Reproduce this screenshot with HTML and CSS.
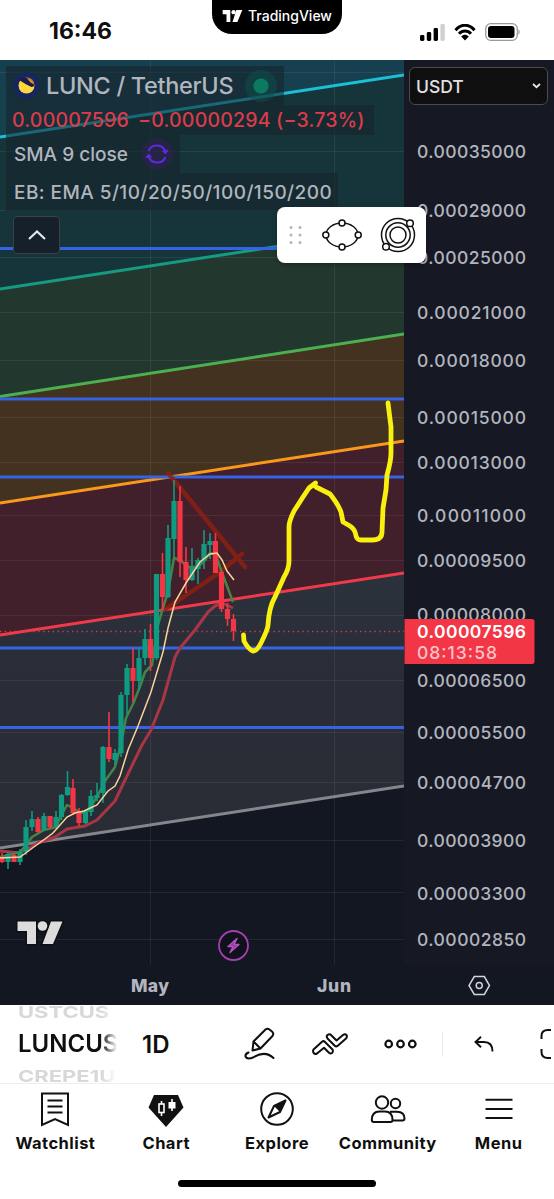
FILE: index.html
```html
<!DOCTYPE html>
<html lang="en">
<head>
  <meta charset="UTF-8" />
  <meta name="viewport" content="width=device-width, initial-scale=1.0" />
  <title>LUNC / TetherUS – TradingView</title>
  <link rel="stylesheet" href="styles.css">
</head>
<body>
  <header class="status">
    <div class="clock">16:46</div>
    <div class="island">
      <svg width="21" height="12" viewBox="0 0 36 22"><path d="M0 0H14V22H7V8H0ZM25 0H36L27 22H18Z" fill="#fff"/><circle cx="20" cy="4" r="4" fill="#fff"/></svg>
      <span>TradingView</span>
    </div>
    <div class="indicators">
      <svg width="25" height="17" viewBox="0 0 25 17">
        <rect x="0" y="11" width="4.4" height="6" rx="1.4"/><rect x="6.8" y="8" width="4.4" height="9" rx="1.4"/><rect x="13.6" y="4" width="4.4" height="13" rx="1.4"/><rect x="20.4" y="0" width="4.4" height="17" rx="1.4" fill="#d0d0d0"/>
      </svg>
      <svg width="22" height="17" viewBox="0 0 22 17">
        <path d="M1.5 6.2C7-.4 15-.4 20.500 6.200M5 9.800C8.500 6 13.500 6 17 9.800" fill="none" stroke="#000" stroke-width="3"/>
        <path d="M7.200 12.500C9.300 10.300 12.700 10.300 14.800 12.500L11 16.500Z"/>
      </svg>
      <svg width="36" height="18" viewBox="0 0 36 18">
        <rect x=".7" y=".7" width="31.600" height="16.600" rx="5" fill="none" stroke="#999" stroke-width="1.300"/>
        <rect x="3" y="3" width="26.500" height="12" rx="3"/><path d="M33.500 6Q36 9 33.500 12Z" fill="#999"/>
      </svg>
    </div>
  </header>

  <main class="chart">
    <svg class="plot" width="554" height="945" viewBox="0 60 554 945">
      <defs>
        <linearGradient id="top" x1="0" y1="0" x2="0" y2="1"><stop offset="0" stop-color="#163f50"/><stop offset="1" stop-color="#15424c"/></linearGradient>
        <linearGradient id="low" x1="0" y1="0" x2="0" y2="1"><stop offset="0" stop-color="#2a323c"/><stop offset=".45" stop-color="#2a2c37"/><stop offset="1" stop-color="#2a2c35"/></linearGradient>
        <clipPath id="pane"><rect x="0" y="60" width="404" height="904"/></clipPath>
      </defs>
      <rect x="0" y="60" width="554" height="945" fill="#131722"/>
      <rect x="404" y="60" width="150" height="945" fill="#161924"/>
      <rect x="0" y="964" width="554" height="41" fill="#131722"/>
      <g clip-path="url(#pane)">
        <!-- channel bands -->
        <path d="M0 60H404V75L0 137Z" fill="url(#top)"/>
        <path d="M0 137L404 75V227L0 289Z" fill="#15353b"/>
        <path d="M0 289L404 227V334L0 396.500Z" fill="#22382f"/>
        <path d="M0 396.500L404 334V441L0 503Z" fill="#43321f"/>
        <path d="M0 503L404 441V573L0 635Z" fill="#411f2b"/>
        <path d="M0 635L404 573V786L0 848Z" fill="url(#low)"/>

        <path class="grid" d="M0 72.500H404M0 151.500H404M0 210.500H404M0 257.500H404M0 312.500H404M0 360.500H404M0 417.500H404M0 462.500H404M0 515.500H404M0 560.500H404M0 615.500H404M0 680.500H404M0 732.500H404M0 782.500H404M0 840.500H404M0 892.500H404M0 939.500H404M150.500 60V964M334.500 60V964"/>

        <g class="trend">
          <path d="M0 137L404 75" stroke="#1bbfd6"/>
          <path d="M0 289L404 227" stroke="#179a82"/>
          <path d="M0 396.500L404 334" stroke="#4caf50"/>
          <path d="M0 503L404 441" stroke="#f9981b"/>
          <path d="M0 635L404 573" stroke="#f03a4b"/>
          <path d="M0 848L404 786" stroke="#85868c"/>
        </g>

        <!-- horizontal levels -->
        <path d="M0 248.500H404M0 399H404M0 477H404M0 648H404M0 727.500H404" stroke="#3463e3" stroke-width="3"/>
        <path d="M0 631.500H404" stroke="#d83c4c" stroke-width="1.300" stroke-dasharray="1.300 3.500"/>

        <path d="M168 473L245 567M164 610L216 575L242 554" fill="none" stroke="#8c2110" stroke-width="4.500" stroke-linecap="round" opacity=".85"/>

        <!-- moving averages -->
        <g class="ma">
          <path d="M0 851L20 853L38 843L55 837L67 829L85 826L97 820L115 801L125 780L142 745L151 730L163 700L175 657L180 648L195 630L208 612L215 606L222 603L233 608" stroke="#a83646" stroke-width="3"/>
          <path d="M0 857L20 852L26 845L32 837L44 830L56 827L61 816L67 805L73 808L79 812L85 813L91 806L97 797L105 781L115 767L121 744L126 718L133 704L141 684L145 672L152 665L158 625L162 611L168 592L174 558L180 560L188 567L198 567L205 560L210 553L216 555L221 570L227 586L233 602" stroke="#438548" stroke-width="2.500"/>
        </g>

        <g class="up">
          <path class="wick" d="M8 852V869M20 849V865M26 820V855M32 811V831M44 813V831M56 811V828M61.500 794V820M67.500 771V796M85.500 810V824M91 790V816M97 783V801M103 746V803M115 749V765M121 692V757M127 664V714M139 648V690M145 629V665M156.500 574V660M168 525V598M174 480V557M192 548V581M198 558V584M204 530V569M210 533V559"/>
          <path class="body" d="M8 854V862M20 852V862M26 827V852M32 819V827M44 816V830M56 817V826M61.500 795V817M67.500 787V795M85.500 811V823M91 796V812M97 795V798M103 747V793M115 753V760M121 695V753M127 668V695M139 658V681M145 639V658M156.500 574V658M168 538V597M174 501V539M192 568V580M198 560V569M204 544V561M210 541V545"/>
        </g>
        <g class="down">
          <path class="wick" d="M2 853V863M14 853V862M38 817V833M50 816V829M73 779V815M79 808V826M109 712V762M133 648V702M150.500 624V671M162.500 553V610M180 486V577M186 547V593M215.500 533V573M221.500 571V612M227.500 603V626M233.500 614V641"/>
          <path class="body" d="M2 858V862M14 855V862M38 819V832M50 816V827M73 788V813M79 811V823M109 747V759M133 668V681M150.500 639V658M162.500 574V597M180 501V562M186 562V580M215.500 541V573M221.500 572V609M227.500 609V619M233.500 619V631"/>
        </g>
        <path d="M0 858L20 857L27 852L38 844L53 833L67 817L75 813L84 811L97 805L108 791L115 786L120 776L128 750L138 726L151 692L163 652L168 628L175 602L186 583L200 562L210 554L217 553L222 560L227 571L234 580" fill="none" stroke="#fbd49a" stroke-width="1.500"/>

        <path class="brush" d="M243.500 635L244 641Q248 649 253 651Q257 651 261 643Q268 629 268 625Q269 607 275 597L284 577Q289 569 289 561V527Q289 521 294 511L303 497L309 488L315.500 483M316 487L330 494Q338 504 341 512L343 522L350 526Q355 529 356 536Q357 540 361 540H372Q382 540 382 532L383 508L386 490L387 475Q391 461 391 453V427L388 403"/>
      </g>

      <!-- publisher mark -->
      <g fill="#dcdcdc" stroke="#0d0f14" stroke-width="3" paint-order="stroke">
        <path d="M17.500 921.500H36V944H27V931H17.500ZM51 921.500H62.500L53 944H42.500Z"/><circle cx="42.500" cy="926" r="4.800"/>
      </g>

      <circle cx="233.500" cy="945.500" r="14.500" fill="#10121b" stroke="#a53fb2" stroke-width="1.800"/>
      <path d="M237 938.500L228 946.500H233L230 952.500L239 944.500H234Z" fill="#8f3a9b" stroke="#b353c0" stroke-width="1.400" stroke-linejoin="round"/>

      <g class="price">
        <text x="417" y="157.500" textLength="109">0.00035000</text>
        <text x="417" y="216.500" textLength="109">0.00029000</text>
        <text x="417" y="263.500" textLength="109">0.00025000</text>
        <text x="417" y="318.500" textLength="109">0.00021000</text>
        <text x="417" y="366.500" textLength="109">0.00018000</text>
        <text x="417" y="424" textLength="109">0.00015000</text>
        <text x="417" y="468.500" textLength="109">0.00013000</text>
        <text x="417" y="521.500" textLength="109">0.00011000</text>
        <text x="417" y="567" textLength="109">0.00009500</text>
        <text x="417" y="620.500" textLength="109">0.00008000</text>
        <text x="417" y="686.500" textLength="109">0.00006500</text>
        <text x="417" y="739" textLength="109">0.00005500</text>
        <text x="417" y="788.500" textLength="109">0.00004700</text>
        <text x="417" y="847" textLength="109">0.00003900</text>
        <text x="417" y="899.500" textLength="109">0.00003300</text>
        <text x="417" y="945.500" textLength="109">0.00002850</text>
      </g>
      <path d="M404.500 619H532Q534.500 619 534.500 621.500V661.500Q534.500 664 532 664H404.500Z" fill="#f23645"/>
      <g class="last">
        <text x="417" y="637.500" textLength="109">0.00007596</text>
        <text class="left" x="417" y="658.500" textLength="80">08:13:58</text>
      </g>
      <g class="months">
        <text x="150" y="992" textLength="38">May</text>
        <text x="334" y="992" textLength="34">Jun</text>
      </g>
      <path d="M474.300 976.500H484.300L489.500 985.500L484.300 994.500H474.300L469 985.500Z" fill="none" stroke="#d1d4dc" stroke-width="1.500"/>
      <circle cx="479.200" cy="985.500" r="3" fill="none" stroke="#d1d4dc" stroke-width="1.500"/>
    </svg>

    <section class="legend">
      <div class="row symbol">
        <svg width="27" height="27" viewBox="0 0 27 27"><circle cx="13.500" cy="13.500" r="13" fill="#172560"/><circle cx="13.500" cy="13.500" r="8" fill="#ffd83d"/><path d="M6 8Q9 4.500 13 5.500Q20 6 21.500 13Q20 16 17.500 14.500Q14 13 6 8Z" fill="#172048"/><path d="M14 6Q20 7 21.400 12.500Q17 11 14 6Z" fill="#f08a2c"/></svg>
        <span>LUNC / TetherUS</span>
        <i class="market"></i>
      </div>
      <div class="row quote"><span>0.00007596</span><span>−0.00000294 (−3.73%)</span></div>
      <div class="row study">
        <span>SMA 9 close</span>
        <i class="sync"><svg width="24" height="22" viewBox="0 0 24 22" fill="none" stroke="#5b2be0" stroke-width="2"><path d="M3.500 8A9 9 0 0 1 20.500 9M20.500 14A9 9 0 0 1 3.500 13"/><path d="M17.500 8L20.500 11L23 7.500ZM1 14.500L3.500 11L6.500 14Z" fill="#5b2be0" stroke-width="1"/></svg></i>
      </div>
      <div class="row ema"><span>EB: EMA 5/10/20/50/100/150/200</span></div>
      <button class="collapse"><svg width="18" height="10" viewBox="0 0 18 10"><path d="M1 9L9 1.500L17 9" fill="none" stroke="#e4e6eb" stroke-width="2.200"/></svg></button>
    </section>

    <div class="currency"><span>USDT</span><svg width="9" height="6" viewBox="0 0 9 6"><path d="M1 1L4.500 4.200L8 1" fill="none" stroke="#e6e6e6" stroke-width="1.800"/></svg></div>

    <div class="floating">
      <svg width="14" height="20" viewBox="0 0 14 20" fill="#b5b5b5"><circle cx="2" cy="2.500" r="1.500"/><circle cx="11" cy="2.500" r="1.500"/><circle cx="2" cy="10" r="1.500"/><circle cx="11" cy="10" r="1.500"/><circle cx="2" cy="17.500" r="1.500"/><circle cx="11" cy="17.500" r="1.500"/></svg>
      <svg width="40" height="32" viewBox="0 0 40 32" fill="#fff" stroke="#111" stroke-width="1.500"><ellipse cx="20" cy="16" rx="16" ry="12"/><circle cx="20" cy="4" r="3"/><circle cx="20" cy="28" r="3"/><circle cx="3.800" cy="16" r="3"/><circle cx="36.200" cy="16" r="3"/></svg>
      <svg width="36" height="36" viewBox="0 0 36 36" fill="#fff" stroke="#111" stroke-width="1.500"><circle cx="18" cy="18" r="16.500"/><circle cx="18" cy="18" r="12.200"/><circle cx="18" cy="18" r="8"/><circle cx="30" cy="6.300" r="3.300"/><circle cx="6" cy="29.700" r="3.300"/></svg>
    </div>
  </main>

  <div class="toolbar">
    <div class="wheel">
      <span class="dim">USTCUS</span>
      <span class="current">LUNCUS</span>
      <span class="dim">CREPE1U</span>
    </div>
    <div class="interval">1D</div>
    <svg class="draw" width="32" height="34" viewBox="0 0 32 34" fill="none" stroke="#0f0f0f" stroke-width="2" stroke-linecap="round" stroke-linejoin="round"><path d="M8.500 23.500L9.500 14.500L21.500 2.500Q23.500 1 25.500 2.500L28.500 5Q30 7 28.500 9L16.500 21.500L8.500 23.500ZM9.500 14.500L16.500 21.500M4.500 25.500Q1 27 1.500 29.500Q3 33 9 30.500Q21 23 29.500 31"/></svg>
    <svg class="indicator" width="36" height="22" viewBox="0 0 36 22" fill="none" stroke="#0f0f0f" stroke-width="2" stroke-linejoin="round"><path d="M1.500 16.500L10 8.700Q11.500 7.500 13 9L20.500 16.500Q21.500 18.500 20 20Q18.500 21 17 19.700L12 14.700L5 20.500Q3 21.500 1.700 20Q.5 18 1.500 16.500Z"/><path d="M15.500 5.500Q14 3.500 15.500 2Q17.500.5 19 2L24.500 7.500L31 2Q33 .5 34.500 2Q35.500 4 34 5.500L25.500 13Q24 14 22.500 12.500Z"/></svg>
    <svg class="more" width="33" height="10" viewBox="0 0 33 10" fill="none" stroke="#0f0f0f" stroke-width="2.200"><circle cx="4.700" cy="5" r="3.300"/><circle cx="16.500" cy="5" r="3.300"/><circle cx="28.300" cy="5" r="3.300"/></svg>
    <i class="divider"></i>
    <svg class="undo" width="20" height="16" viewBox="0 0 20 16" fill="none" stroke="#0f0f0f" stroke-width="1.900"><path d="M7 .8L1.500 6L7 11.300M1.500 6H10Q18.500 6 18.500 15.500"/></svg>
    <svg class="full" width="14" height="30" viewBox="0 0 14 30" fill="none" stroke="#0f0f0f" stroke-width="2"><path d="M11 1H8Q1.500 1 1.500 7V10M1.500 20V23Q1.500 29 8 29H11"/></svg>
  </div>

  <nav class="tabs">
    <a class="tab"><svg width="36" height="36" viewBox="0 0 36 36" fill="none" stroke="#111" stroke-width="2"><path d="M5 2.500H31V34L18 28L5 34ZM10.500 9.500H25.500M10.500 15.500H25.500M10.500 21.500H25.500"/></svg>Watchlist</a>
    <a class="tab"><svg width="36" height="36" viewBox="0 0 36 36"><path d="M6 4H30L35.500 16.500L18 36L.5 16.500Z" fill="#111"/><path d="M13.500 10V25M24 8V20" stroke="#fff" stroke-width="1.600"/><rect x="11" y="13" width="5" height="8.500" fill="#111" stroke="#fff" stroke-width="1.600"/><rect x="20.500" y="11" width="7" height="6.500" fill="#fff"/></svg>Chart</a>
    <a class="tab"><svg width="36" height="36" viewBox="0 0 36 36"><circle cx="18" cy="18" r="15.800" fill="none" stroke="#111" stroke-width="2"/><path d="M26.500 9.500L15 15L9.500 26.500L21 21Z" fill="none" stroke="#111" stroke-width="2" stroke-linejoin="round"/><path d="M26.500 9.500L15 15L21 21Z" fill="#111"/></svg>Explore</a>
    <a class="tab"><svg width="36" height="36" viewBox="0 0 36 36" fill="none" stroke="#111" stroke-width="2" stroke-linejoin="round"><circle cx="12" cy="11.500" r="6.200"/><circle cx="25.500" cy="12.500" r="4.700"/><path d="M1.800 29Q1.800 20.500 9.500 20.500H15Q22.500 20.500 22.500 29Q22.500 31 20.500 31H3.800Q1.800 31 1.800 29ZM20 20.800H27Q34.500 21 34.500 27.500Q34.500 29.500 32.500 29.500H22.500"/></svg>Community</a>
    <a class="tab"><svg width="36" height="36" viewBox="0 0 36 36" stroke="#111" stroke-width="2"><path d="M4.500 8.800H31.500M4.500 17.900H31.500M4.500 27H31.500"/></svg>Menu</a>
  </nav>
  <div class="home"><i></i></div>
</body>
</html>
```
FILE: styles.css
```css
* {
  box-sizing: border-box;
}
body {
  margin: 0;
  width: 554px;
  height: 1199px;
  overflow: hidden;
  background: #fff;
  color: #0f0f0f;
  font-family: Inter, Roboto, sans-serif;
  display: flex;
  flex-direction: column;
}
svg {
  display: block;
  flex: none;
}
.status {
  height: 60px;
  flex: none;
  display: grid;
  grid-template-columns: 212px 130px 1fr;
}
.clock {
  padding: 18px 0 0 49px;
  font-size: 23px;
  font-weight: 700;
  line-height: 26px;
}
.island {
  height: 34px;
  background: #000;
  color: #fff;
  border-radius: 0 0 20px 20px;
  display: flex;
  justify-content: center;
  gap: 5px;
  padding-top: 10px;
  font-size: 14px;
  font-weight: 500;
  line-height: 12px;
}
.indicators {
  display: flex;
  align-items: center;
  align-self: start;
  gap: 9px;
  padding: 23px 0 0 78px;
}
.chart {
  position: relative;
  height: 945px;
  flex: none;
}
.grid {
  fill: none;
  stroke: #fff;
  stroke-opacity: .07;
}
.trend path {
  stroke-width: 3;
}
.ma path {
  fill: none;
  stroke-linejoin: round;
}
.up {
  stroke: #0f9b81;
}
.down {
  stroke: #f23645;
}
.wick {
  stroke-width: 1.6;
}
.body {
  stroke-width: 5.2;
}
.brush {
  fill: none;
  stroke: #faf00f;
  stroke-width: 4.8;
  stroke-linecap: round;
  stroke-linejoin: round;
}
.price,
.last {
  font-size: 17.5px;
  font-weight: 500;
  fill: #b2b5be;
}
.last {
  fill: #fff;
  font-weight: 600;
}
.last .left {
  font-weight: 500;
  fill: #fcc5ca;
}
.months {
  font-size: 17.5px;
  font-weight: 800;
  fill: #b2b5be;
  text-anchor: middle;
}
.legend {
  position: absolute;
  top: 6px;
  left: 6px;
  display: flex;
  flex-direction: column;
  align-items: flex-start;
  color: #b0b5be;
}
.row {
  display: flex;
  align-items: center;
  height: 38px;
  background: rgba(24, 32, 42, .55);
  white-space: nowrap;
  font-size: 19px;
  font-weight: 500;
  padding-left: 8px;
}
.symbol {
  width: 262px;
  height: 39px;
  width: 278px;
  padding-left: 7px;
  gap: 6px;
  font-size: 23.5px;
  letter-spacing: -.3px;
}
.market {
  width: 32px;
  height: 32px;
  margin-left: 6px;
  border-radius: 50%;
  background: radial-gradient(circle, #0a7a61 7px, rgba(12, 80, 75, .5) 8px);
}
.quote {
  width: 368px;
  height: 30px;
  gap: 9px;
  padding-left: 6px;
  font-size: 19.5px;
  letter-spacing: .2px;
  color: #dc3b4b;
}
.study {
  width: 174px;
  gap: 13px;
}
.sync {
  width: 32px;
  height: 32px;
  border-radius: 50%;
  background: rgba(52, 30, 90, .5);
  display: grid;
  place-items: center;
}
.ema {
  width: 332px;
  letter-spacing: .45px;
}
.collapse {
  width: 47px;
  height: 38px;
  margin: 5px 0 0 7px;
  padding: 0;
  border: 1px solid #3c4148;
  border-radius: 4px;
  background: #16202a;
  display: grid;
  place-items: center;
}
.currency {
  position: absolute;
  top: 7px;
  left: 409px;
  width: 139px;
  height: 38px;
  border: 1px solid #4a4b50;
  border-radius: 6px;
  background: #0f0f0f;
  color: #e0e0e0;
  display: flex;
  align-items: center;
  justify-content: space-between;
  padding: 0 6px;
  font-size: 17.5px;
  font-weight: 500;
}
.floating {
  position: absolute;
  top: 147px;
  left: 277px;
  width: 149px;
  height: 56px;
  border-radius: 8px;
  background: #fff;
  box-shadow: 0 2px 4px rgba(0, 0, 0, .3);
  display: flex;
  align-items: center;
  padding-left: 12px;
}
.floating svg:nth-child(2) {
  margin: 0 18px 0 19px;
}
.toolbar {
  height: 79px;
  flex: none;
  border-bottom: 1px solid #efefef;
  display: flex;
  align-items: center;
  overflow: hidden;
}
.wheel {
  width: 99px;
  height: 78px;
  margin-left: 18px;
  overflow: hidden;
  display: flex;
  flex-direction: column;
  justify-content: center;
  -webkit-mask-image: linear-gradient(90deg, #000 84%, transparent);
  mask-image: linear-gradient(90deg, #000 84%, transparent);
}
.current {
  font-size: 24px;
  font-weight: 600;
  line-height: 42px;
}
.dim {
  font-size: 22px;
  font-weight: 700;
  line-height: 22px;
  color: #d8d8d8;
  transform: scaleY(.75);
}
.interval {
  margin-left: 25px;
  width: 102px;
  font-size: 24px;
  font-weight: 600;
}
.indicator {
  margin-left: 36px;
}
.more {
  margin-left: 36px;
}
.divider {
  width: 1px;
  height: 26px;
  margin: 0 31px 0 25px;
  background: #ebebeb;
}
.full {
  margin-left: 46px;
}
.tabs {
  height: 83px;
  flex: none;
  display: grid;
  grid-template-columns: repeat(5, 1fr);
  padding-top: 7px;
}
.tab {
  display: flex;
  flex-direction: column;
  align-items: center;
  gap: 6px;
  font-size: 16.5px;
  font-weight: 700;
  letter-spacing: .45px;
  line-height: 20px;
}
.home {
  padding-top: 13px;
  display: flex;
  justify-content: center;
}
.home i {
  width: 198px;
  height: 7px;
  border-radius: 4px;
  background: #000;
}
```
